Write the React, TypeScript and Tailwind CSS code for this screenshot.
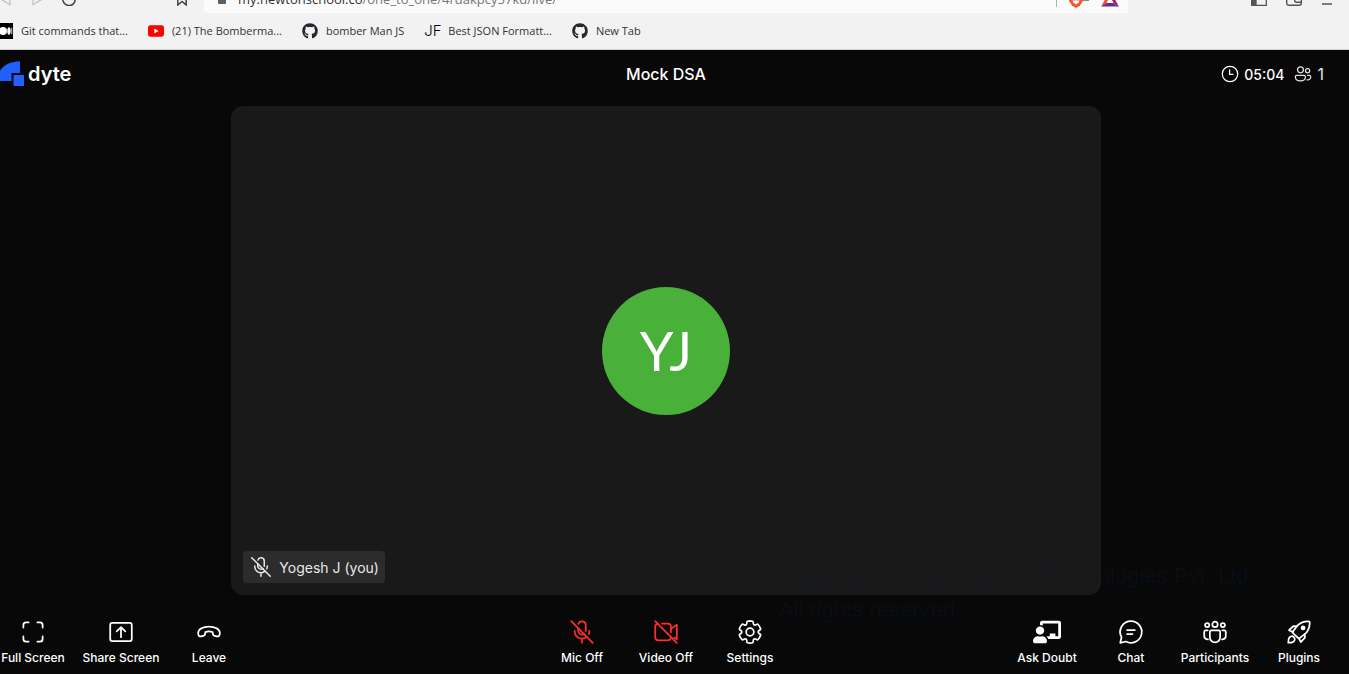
import React from "react";
import { FaGithub, FaChalkboardTeacher } from "react-icons/fa";

type IconProps = { className?: string; children?: React.ReactNode };

function Icon({ className = "size-7", children }: IconProps) {
  return (
    <svg
      viewBox="0 0 24 24"
      fill="none"
      stroke="currentColor"
      strokeWidth={1.5}
      strokeLinecap="round"
      strokeLinejoin="round"
      aria-hidden="true"
      className={`${className} shrink-0`}
    >
      {children}
    </svg>
  );
}

const FullScreenIcon = () => (
  <Icon>
    <path d="M3.75 8.2V6A2.25 2.25 0 0 1 6 3.75h2.2M15.8 3.75H18A2.25 2.25 0 0 1 20.25 6v2.2M20.25 15.8V18A2.25 2.25 0 0 1 18 20.25h-2.2M8.2 20.25H6A2.25 2.25 0 0 1 3.75 18v-2.2" />
  </Icon>
);

const ShareScreenIcon = () => (
  <Icon>
    <rect x="2.75" y="4.25" width="18.5" height="15.5" rx="1.75" />
    <path d="M12 16.4V8M8.3 11.5 12 7.8l3.7 3.7" />
  </Icon>
);

const LeaveIcon = () => (
  <Icon>
    <path d="M12 7.3c4.8 0 9.3 1.9 9.3 5.6 0 2.2-1 3.1-2.6 2.8l-1.9-.4c-.9-.2-1.4-.8-1.5-1.7l-.2-1.5c-1.9-.7-4.3-.7-6.2 0l-.2 1.5c-.1.9-.6 1.5-1.5 1.7l-1.9.4c-1.6.3-2.6-.6-2.6-2.8 0-3.7 4.5-5.6 9.3-5.6Z" />
  </Icon>
);

const MicOffIcon = ({ className }: IconProps) => (
  <Icon className={className}>
    <path d="M8.9 5.1a3.25 3.25 0 0 1 6.35.9v5.2M8.75 8.7V11a3.25 3.25 0 0 0 5.3 2.5" />
    <path d="M5.75 11v.5A6.25 6.25 0 0 0 12 17.75a6.2 6.2 0 0 0 4.2-1.6M18.25 11v.5c0 .8-.1 1.5-.4 2.2M12 17.75v3.5" />
    <path d="m2.75 2.75 18.5 18.5" />
  </Icon>
);

const VideoOffIcon = () => (
  <Icon>
    <path d="M4.8 4.8A2.75 2.75 0 0 0 2.75 7.5v9a2.75 2.75 0 0 0 2.75 2.75h8a2.75 2.75 0 0 0 2.7-2.9M8.6 4.75h4.9a2.75 2.75 0 0 1 2.75 2.75v4.8" />
    <path d="m16.25 9.3 5-3.5v12.4l-2-1.3" />
    <path d="m2.75 2.75 18.5 18.5" />
  </Icon>
);

const SettingsIcon = () => (
  <Icon>
    <g transform="translate(0.36 0.36) scale(0.97)">
      <path d="M12.012 2.25c.734.008 1.465.093 2.182.253.313.07.547.33.582.649l.17 1.527c.077.701.669 1.232 1.375 1.233.19 0 .377-.04.552-.117l1.401-.615c.291-.128.632-.059.849.174a9.74 9.74 0 0 1 2.205 3.792c.095.305-.014.636-.271.826l-1.242.915a1.38 1.38 0 0 0 0 2.226l1.243.915c.257.19.366.521.271.826a9.8 9.8 0 0 1-2.203 3.792.75.75 0 0 1-.849.175l-1.406-.617a1.38 1.38 0 0 0-1.926 1.114l-.169 1.526a.75.75 0 0 1-.572.647 9.5 9.5 0 0 1-4.406 0 .75.75 0 0 1-.572-.647l-.169-1.524a1.38 1.38 0 0 0-1.925-1.11l-1.406.616a.75.75 0 0 1-.849-.175 9.8 9.8 0 0 1-2.204-3.796.75.75 0 0 1 .272-.826l1.243-.916a1.38 1.38 0 0 0 0-2.226l-1.243-.914a.75.75 0 0 1-.271-.826 9.75 9.75 0 0 1 2.204-3.792.75.75 0 0 1 .85-.174l1.4.615a1.38 1.38 0 0 0 1.93-1.118l.171-1.526a.75.75 0 0 1 .582-.649c.717-.16 1.449-.244 2.201-.253Z" />
      <circle cx="12" cy="12" r="3.4" />
    </g>
  </Icon>
);

const ChatIcon = () => (
  <Icon>
    <path d="M12 2.75a9.25 9.25 0 1 1-4.4 17.4l-4.8 1.1 1.1-4.7A9.25 9.25 0 0 1 12 2.75Z" />
    <path d="M8.7 10.3h6.6M8.7 13.8h4.5" />
  </Icon>
);

const ParticipantsIcon = () => (
  <Icon>
    <circle cx="12" cy="5.5" r="2.3" />
    <circle cx="5.3" cy="6.1" r="1.8" />
    <circle cx="18.7" cy="6.1" r="1.8" />
    <path d="M8.9 10.6h6.2c.8 0 1.3.5 1.3 1.3v4.5a4.4 4.4 0 0 1-8.8 0v-4.5c0-.8.5-1.3 1.3-1.3Z" />
    <path d="M5.7 10.6H4.05c-.8 0-1.3.5-1.3 1.3v3.2c0 2 1.3 3.3 3.2 3.3M18.3 10.6h1.65c.8 0 1.3.5 1.3 1.3v3.2c0 2-1.3 3.3-3.2 3.3" />
  </Icon>
);

const RocketIcon = () => (
  <Icon>
    <path d="M21.2 3.7c.1-.6-.3-.9-.8-.9-4.3-.1-7.2 1-9.6 3.5l-4 5.2c-.4.5-.3 1 .1 1.4l4.2 4.2c.4.4.9.5 1.4.1l5.2-4c2.5-2.4 3.5-5.2 3.5-9.5Z" />
    <path d="M9.9 7.2 7.2 6.9 3.4 10.5l3.4 1.6M16.8 14.1l.3 2.7-3.6 3.8-1.6-3.4" />
    <path d="M7.6 16.4c-1.3-1.2-3.1-.9-3.9.4-.8 1.2-.9 2.7-.9 4.4 1.7 0 3.2-.1 4.4-.9 1.3-.8 1.6-2.6.4-3.9Z" />
    <circle cx="15.5" cy="8.5" r="1.3" fill="currentColor" />
  </Icon>
);

const ClockIcon = () => (
  <Icon className="size-5">
    <circle cx="12" cy="12" r="9.25" />
    <path d="M11.5 7v5.500h4" />
  </Icon>
);

const PeopleIcon = () => (
  <Icon className="size-5">
    <circle cx="9" cy="7" r="3.5" />
    <circle cx="17.5" cy="8" r="2.5" />
    <path d="M4.500 13.750h8.800c.9 0 1.600.7 1.600 1.600 0 3.300-2.500 5-5.900 5s-6.200-1.700-6.200-5c0-.9.8-1.600 1.700-1.600ZM17.500 13.750h2.200c.9 0 1.600.7 1.600 1.600 0 2.700-2 4-4.600 3.700" />
  </Icon>
);

function DyteLogo() {
  return (
    <a href="#dyte" className="flex items-center gap-1 text-white">
      <svg viewBox="0 0 24 26" className="h-[26px] w-6" aria-hidden="true">
        <path d="M20 .3v11.700h-8.500v8H-3C-3 8 7 .3 20 .3Z" fill="#2160fd" />
        <path d="M13.500 14H24v11H13.500Z" fill="#2160fd" />
      </svg>
      <span className="text-[20px] leading-6 font-semibold">dyte</span>
    </a>
  );
}

const MediumMark = () => (
  <svg viewBox="0 0 16 16" className="size-4" aria-hidden="true">
    <path d="M0 0h16v16H0z" />
    <circle cx="6" cy="8" r="4" fill="#fff" />
    <ellipse cx="12" cy="8" rx="1.7" ry="3.7" fill="#fff" />
    <path d="M14.700 4.800v6.400" stroke="#fff" strokeWidth=".8" />
  </svg>
);

const YoutubeMark = () => (
  <svg viewBox="0 0 16 16" className="size-4" aria-hidden="true">
    <rect y="2.3" width="16" height="11.4" rx="2.6" fill="#f00" />
    <path d="m6.300 5.500 4.300 2.500-4.300 2.500Z" fill="#fff" />
  </svg>
);

const bookmarks: { label: string; mark: React.ReactNode }[] = [
  { label: "Git commands that...", mark: <MediumMark /> },
  { label: "(21) The Bomberma...", mark: <YoutubeMark /> },
  { label: "bomber Man JS", mark: <FaGithub className="size-4 text-[#24292f]" /> },
  {
    label: "Best JSON Formatt...",
    mark: <span className="w-4 font-['Inter'] text-[15px] leading-4 font-light text-black">JF</span>,
  },
  { label: "New Tab", mark: <FaGithub className="size-4 text-[#24292f]" /> },
];

function BrowserChrome() {
  return (
    <div className="shrink-0 border-b border-[#d0d0d0] bg-[#f2f2f2] font-['Open_Sans',sans-serif] text-[#333]">
      <div className="flex h-[13px] items-end overflow-hidden">
        <div className="flex h-7 w-[204px] shrink-0 items-center text-[#444]">
          <button aria-label="Back" className="text-[#c2c2c2]">
            <svg viewBox="0 0 12 14" className="h-3.5 w-3" fill="none" stroke="currentColor" strokeWidth="1.3">
              <path d="M10 1.500v11L.500 7Z" />
            </svg>
          </button>
          <button aria-label="Forward" className="ml-5 text-[#c2c2c2]">
            <svg viewBox="0 0 12 14" className="h-3.5 w-3" fill="none" stroke="currentColor" strokeWidth="1.3">
              <path d="M1 1.500v11L10.500 7Z" />
            </svg>
          </button>
          <button aria-label="Reload" className="ml-[18px]">
            <svg viewBox="0 0 14 14" className="size-3.5" fill="none" stroke="currentColor" strokeWidth="1.5">
              <path d="M12.500 4.500a6.200 6.200 0 1 0 .7 2.500" />
            </svg>
          </button>
          <button aria-label="Bookmark this page" className="ml-[100px]">
            <svg viewBox="0 0 12 14" className="h-3.5 w-3" fill="none" stroke="currentColor" strokeWidth="1.5">
              <path d="M1.800 0v13L6 9.500l4.200 3.500V0" />
            </svg>
          </button>
        </div>
        <div className="flex h-7 min-w-0 max-w-[924px] flex-1 items-center rounded-b-[3px] bg-[#fbfbfb] pr-2 pl-3.5">
          <svg viewBox="0 0 8 10" className="h-2.5 w-2 shrink-0" aria-hidden="true">
            <rect width="8" height="10" rx="1" fill="#5c6066" />
          </svg>
          <span className="ml-3 flex-1 truncate text-[13px] leading-5 text-[#777]">
            <span className="text-[#333]">my.newtonschool.co</span>/one_to_one/4rdakpcy57kd/live/
          </span>
          <span className="h-4 w-px bg-[#b0b0b0]" />
          <button aria-label="Shields" className="ml-[11px]">
            <svg viewBox="0 0 22 18" className="h-[18px] w-[22px]">
              <path d="M2 1h12l1 10-3 4.500L8 18l-4-2.500L1 11Z" fill="#fb542b" />
              <path d="m4.500 10 2 .8L8 10l1.500.8 2-.8-.7 2.500L8 14.500l-2.800-2Z" fill="#fff" />
              <path d="M13.500 3H21v7.800h-6Z" fill="#635f86" />
            </svg>
          </button>
          <button aria-label="Rewards" className="ml-[11px] pr-px">
            <svg viewBox="0 0 18 16" className="h-4 w-[18px]">
              <path d="M9 0 0 15.500 5.500 12 9 5Z" fill="#ff4724" />
              <path d="m9 0 9 15.500-5.500-3.500L9 5Z" fill="#9e1f63" />
              <path d="M0 15.500h18L12.500 12h-7Z" fill="#662d91" />
            </svg>
          </button>
        </div>
        <div className="ml-auto flex h-7 shrink-0 items-center gap-[19px] pr-4 text-[#555]">
          <button aria-label="Sidebar">
            <svg viewBox="0 0 16 14" className="h-3.5 w-4" fill="none" stroke="currentColor" strokeWidth="1.3">
              <path d="M.7.7h14.600v12.600H.7Z" />
              <path d="M.7.7H5v12.600H.7Z" fill="currentColor" />
            </svg>
          </button>
          <button aria-label="Wallet">
            <svg viewBox="0 0 16 14" className="h-3.5 w-4" fill="none" stroke="currentColor" strokeWidth="1.4">
              <path d="M.7.7h14.600v10.600a2 2 0 0 1-2 2H2.700a2 2 0 0 1-2-2Z" />
              <path d="M15.300 6H8.700v2.200a2 2 0 0 0 2 2h4.600" />
            </svg>
          </button>
          <button aria-label="Menu">
            <svg viewBox="0 0 12 14" className="h-3.5 w-3" stroke="currentColor" strokeWidth="1.5">
              <path d="M1 2h10M1 7h10M1 12h10" />
            </svg>
          </button>
        </div>
      </div>
      <nav aria-label="Bookmarks" className="-ml-[3px] flex h-9 items-center gap-5 overflow-hidden">
        {bookmarks.map((b) => (
          <a key={b.label} href="#bookmark" className="flex items-center gap-2 text-[11px] leading-4 whitespace-nowrap">
            {b.mark}
            <span>{b.label}</span>
          </a>
        ))}
      </nav>
    </div>
  );
}

type ControlProps = { label: string; icon: React.ReactNode; danger?: boolean };

function Control({ label, icon, danger }: ControlProps) {
  return (
    <button className="flex w-[84px] flex-col items-center gap-1 text-white">
      <span className={`flex h-7 items-center ${danger ? "text-[#ff2d2d]" : ""}`}>{icon}</span>
      <span className="text-[12px] leading-4 font-medium whitespace-nowrap">{label}</span>
    </button>
  );
}

export default function App() {
  return (
    <div className="flex h-screen flex-col overflow-hidden">
      <BrowserChrome />
      <main className="relative flex min-h-0 flex-1 flex-col bg-[#080808] pr-[17px] font-['Inter',sans-serif] text-white">
        <header className="grid h-12 shrink-0 grid-cols-[1fr_auto_1fr] items-center pr-2">
          <DyteLogo />
          <h1 className="pl-2 text-[16px] leading-6 font-medium">Mock DSA</h1>
          <div className="flex items-center justify-end gap-[9px] leading-5">
            <span className="flex items-center gap-1 text-[14px] font-medium">
              <ClockIcon />
              <span className="pt-0.5">05:04</span>
            </span>
            <span className="flex items-center gap-1 text-[16px] text-[#e0e0e0]">
              <PeopleIcon />1
            </span>
          </div>
        </header>

        <section className="flex min-h-0 flex-1 justify-center py-2">
          <div className="relative flex aspect-video h-full items-center justify-center rounded-xl bg-[#191919]">
            <div className="flex size-32 items-center justify-center rounded-full bg-[#49b03a] font-['Lato',sans-serif] text-[54px] leading-none">
              YJ
            </div>
            <div className="absolute bottom-3 left-3 flex h-8 items-center gap-1.5 rounded bg-[#2c2c2c] px-1.5 text-[14px] leading-5 text-[#e8e8e8]">
              <MicOffIcon className="size-6" />
              <span className="pt-0.5">Yogesh J (you)</span>
            </div>
          </div>
        </section>

        <footer className="-mx-[9px] grid shrink-0 grid-cols-[1fr_auto_1fr] pt-[15px] pb-2">
          <div className="flex gap-1">
            <Control label="Full Screen" icon={<FullScreenIcon />} />
            <Control label="Share Screen" icon={<ShareScreenIcon />} />
            <Control label="Leave" icon={<LeaveIcon />} />
          </div>
          <div className="flex">
            <Control label="Mic Off" icon={<MicOffIcon />} danger />
            <Control label="Video Off" icon={<VideoOffIcon />} danger />
            <Control label="Settings" icon={<SettingsIcon />} />
          </div>
          <div className="flex justify-end">
            <Control label="Ask Doubt" icon={<FaChalkboardTeacher className="size-7" />} />
            <Control label="Chat" icon={<ChatIcon />} />
            <Control label="Participants" icon={<ParticipantsIcon />} />
            <Control label="Plugins" icon={<RocketIcon />} />
          </div>
        </footer>

        <p className="pointer-events-none absolute right-[70px] bottom-[47px] w-[500px] font-['Liberation_Sans',sans-serif] text-[22px] leading-[34px] text-[#061a30]/35">
          Copyright © 2022 Incanus Technologies Pvt. Ltd.
          <br />
          All rights reserved.
        </p>
      </main>
    </div>
  );
}
